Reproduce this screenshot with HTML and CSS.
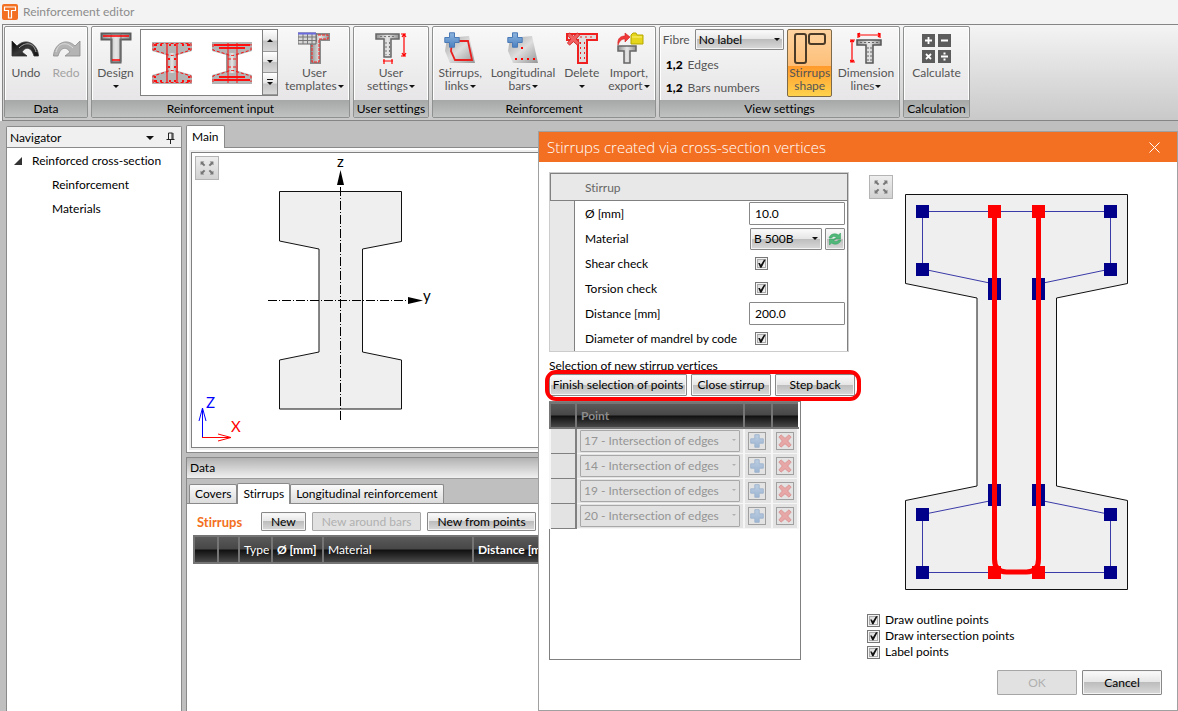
FILE: index.html
```html
<!DOCTYPE html>
<html lang="en">
<head>
<meta charset="utf-8">
<title>Reinforcement editor</title>
<link rel="stylesheet" href="styles.css">
</head>
<body>
<svg class="defs" width="0" height="0" aria-hidden="true">
  <defs>
    <linearGradient id="steel" x1="0" y1="0" x2="1" y2="1"><stop offset="0" stop-color="#a4a4a4"/><stop offset=".5" stop-color="#dedede"/><stop offset="1" stop-color="#969696"/></linearGradient>
    <linearGradient id="web" x1="0" y1="0" x2="1" y2="0"><stop offset="0" stop-color="#929292"/><stop offset=".5" stop-color="#e6e6e6"/><stop offset="1" stop-color="#929292"/></linearGradient>
    <linearGradient id="ink" x1="0" y1="0" x2="1" y2="1"><stop offset="0" stop-color="#000"/><stop offset=".5" stop-color="#3a3a3a"/><stop offset="1" stop-color="#111"/></linearGradient>
    <linearGradient id="blue" x1="0" y1="0" x2="0" y2="1"><stop offset="0" stop-color="#8fb6e0"/><stop offset="1" stop-color="#4a80c0"/></linearGradient>
    <symbol id="plus" viewBox="0 0 16 16"><path d="M5.500.8h5v4.700h4.700v5h-4.700v4.700h-5v-4.700H.8v-5h4.700z" fill="url(#blue)" stroke="#4a7ab5"/></symbol>
    <symbol id="cross" viewBox="0 0 16 16"><path d="M3.500 1L8 5l4.500-4L15 3.500 11 8l4 4.500-2.500 2.500L8 11l-4.500 4L1 12.500 5 8 1 3.500z" fill="#f06060" stroke="#d02828"/></symbol>
    <symbol id="expand" viewBox="0 0 24 24"><path d="M5 5h4L7.800 6.200l2.400 2.400-1.600 1.600-2.400-2.400L5 9zM19 5v4l-1.200-1.200-2.400 2.400-1.600-1.600 2.400-2.400L15 5zM5 19v-4l1.200 1.200 2.400-2.400 1.600 1.600-2.400 2.400L9 19zM19 19h-4l1.200-1.200-2.400-2.400 1.600-1.600 2.400 2.400L19 15z" fill="#777"/></symbol>
    <symbol id="isection" viewBox="0 0 42 44"><path d="M1 1h40v9l-14 4v16l14 4v9H1v-9l14-4V14L1 10z" fill="#b4b4b4"/><path d="M15 12h12v20H15z" fill="url(#web)"/></symbol>
    <symbol id="tsection" viewBox="0 0 32 32"><path d="M1.500 1.500h29v6h-10v23h-9v-23h-10z" fill="url(#web)" stroke="#5c5c5c" stroke-width="2"/><path d="M11 2h10v28H11z" fill="none" stroke="#777"/></symbol>
  </defs>
</svg>

<div class="window">
  <header class="titlebar">
    <svg class="logo" width="16" height="16" viewBox="0 0 16 16"><rect width="16" height="16" rx="2" fill="#f36f21"/><path d="M2.500 3h11v3.500h-4V14h-3V6.500h-4z" fill="none" stroke="#fff" stroke-width="1.200"/></svg>
    <h1>Reinforcement editor</h1>
  </header>

  <div class="ribbon">
    <section class="group g-data">
      <div class="tools">
        <button class="tool"><svg width="32" height="32" viewBox="0 0 32 32"><path d="M2 9v15h15l-5-4c3-5 9-6 12 4h4.500C28 12 16 5 7 14z" fill="url(#ink)" stroke="#333" stroke-width=".8"/><path d="M9 16C16 9 24 11 26 20" fill="none" stroke="#aaa"/></svg><span>Undo</span></button>
        <button class="tool" disabled><svg width="32" height="32" viewBox="0 0 32 32"><path d="M30 9v15H15l5-4c-3-5-9-6-12 4H3.500C4 12 16 5 25 14z" fill="#b4b4b4" stroke="#8c8c8c" stroke-width=".8"/><path d="M23 16C16 9 8 11 6 20" fill="none" stroke="#ddd"/></svg><span>Redo</span></button>
      </div>
      <h2>Data</h2>
    </section>
    <section class="group g-input">
      <div class="tools">
        <button class="tool"><svg width="32" height="32"><use href="#tsection"/><path d="M3 4h26M12 28h8" stroke="red" stroke-width="1.500"/></svg><span>Design<br><i class="drop"></i></span></button>
        <div class="gallery">
          <button class="thumb" aria-label="Template with bars"><svg width="42" height="44" viewBox="0 0 42 44"><use href="#isection"/><path d="M16 2v40M26 2v40" stroke="#ff1010" stroke-width="1.200"/><path d="M2 2.500v6.500l13 4q6 3 12 0l13-4V2.500zM2 41.500V35l13-4q6-3 12 0l13 4v6.500z" fill="none" stroke="#ff1010" stroke-dasharray="3 2"/><path d="M3 4h3M9 4h2M18 4h2M23 4h2M31 4h2M36 4h3M3 40h3M9 40h2M18 40h2M23 40h2M31 40h2M36 40h3M17 18h2M23 18h2M17 26h2M23 26h2M3 8h2M37 8h2M3 36h2M37 36h2" stroke="#ff1010" stroke-width="2"/></svg></button>
          <button class="thumb" aria-label="Template with flange bars"><svg width="42" height="44" viewBox="0 0 42 44"><use href="#isection"/><path d="M17 2v40M26 2v40" stroke="#ff1010"/><path d="M3 4h36M8 7h26M3 39h36M8 36h26" stroke="#ff1010" stroke-width="2"/><path d="M2 3v6l13 4q6 3 12 0l13-4V3M2 41v-6l13-4q6-3 12 0l13 4v6M17 18h9M17 26h9" fill="none" stroke="#ff1010" stroke-dasharray="3 2"/></svg></button>
          <div class="spin"><button aria-label="Scroll up"><i class="drop up"></i></button><button aria-label="Scroll down"><i class="drop"></i></button><button aria-label="More"><i class="drop more"></i></button></div>
        </div>
        <button class="tool"><svg width="32" height="32" viewBox="0 0 32 32"><path d="M18 2h13v6h-9v23h-9V9h5z" fill="url(#web)" stroke="#8a8a8a" stroke-width="2"/><path d="M20 3h10v4h-9v23h-7V13" fill="none" stroke="#ff2020" stroke-dasharray="3 1"/><path d="M0 1h18v11H0z" fill="#d5d5d5" stroke="#666"/><path d="M0 5h18M0 8.500h18M5 2v10M9.500 2v10M14 2v10" stroke="#777"/><path d="M0 1.500h18" stroke="#6a6ae0" stroke-width="2"/></svg><span>User<br>templates<i class="drop"></i></span></button>
      </div>
      <h2>Reinforcement input</h2>
    </section>
    <section class="group g-user">
      <div class="tools">
        <button class="tool"><svg width="32" height="32" viewBox="0 0 32 32"><path d="M1 2h23v5h-8v18H9V7H1z" fill="url(#web)" stroke="#666" stroke-width="1.500"/><path d="M5 4.500h15M11 10v13M14.500 10v13" stroke="#777" stroke-dasharray="2 2"/><path d="M29 2v22M26 2h5M26 24h5M27 5l2-3 2 3M27 21l2 3 2-3M8 29h10M9 27v5M17 27v5" fill="none" stroke="red" stroke-width="1.200"/></svg><span>User<br>settings<i class="drop"></i></span></button>
      </div>
      <h2>User settings</h2>
    </section>
    <section class="group g-reinf">
      <div class="tools">
        <button class="tool"><svg width="32" height="32" viewBox="0 0 32 32"><path d="M3 6l22-2 6 27H6L1 19z" fill="url(#steel)"/><path d="M8 9h16l4 19H11L7 19z" fill="none" stroke="#e82020" stroke-width="1.800"/><use href="#plus" width="16" height="16"/></svg><span>Stirrups,<br>links<i class="drop"></i></span></button>
        <button class="tool"><svg width="32" height="32" viewBox="0 0 32 32"><path d="M3 6l22-2 6 27H6L1 19z" fill="url(#steel)"/><path d="M14 16h2M8 27h2M14 27h2M20 27h2M26 27h2" stroke="red" stroke-width="2"/><use href="#plus" width="16" height="16"/></svg><span>Longitudinal<br>bars<i class="drop"></i></span></button>
        <button class="tool"><svg width="32" height="32" viewBox="0 0 32 32"><path d="M1 2h30v6H21v23h-9V8H1z" fill="#ddd" stroke="#f02020" stroke-width="2"/><path d="M14 5h15M14.500 10v18M18.500 10v18" stroke="#f02020" stroke-dasharray="2 3"/><use href="#cross" width="15" height="14"/></svg><span>Delete<br><i class="drop"></i></span></button>
        <button class="tool"><svg width="32" height="32" viewBox="0 0 32 32"><path d="M5 14h18v5h-6v12h-6V19H5z" fill="url(#web)" stroke="#666" stroke-width="1.500"/><path d="M5 13C4 6 8 4 12 4V1l5 4-5 5V7C9 7 7 8 5 13z" fill="#f03838" stroke="#d02020" stroke-width=".6"/><path d="M18 3l2-2h3l1 2h6v9H18z" fill="#e5d51c" stroke="#b5a800"/><path d="M19 5h10" stroke="#fff27a"/></svg><span>Import,<br>export<i class="drop"></i></span></button>
      </div>
      <h2>Reinforcement</h2>
    </section>
    <section class="group g-view">
      <div class="tools">
        <div class="labels">
          <div class="fibre"><label for="fibre">Fibre</label><div class="select"><select id="fibre"><option>No label</option></select></div></div>
          <button class="line"><b>1,2</b>Edges</button>
          <button class="line"><b>1,2</b>Bars numbers</button>
        </div>
        <button class="tool pressed" aria-pressed="true"><svg width="32" height="32" viewBox="0 0 32 32"><rect x="1" y="2" width="11" height="29" rx="2" fill="none" stroke="#4a3a28" stroke-width="2"/><rect x="15" y="2" width="16" height="10" rx="2" fill="none" stroke="#4a3a28" stroke-width="2"/></svg><span>Stirrups<br>shape</span></button>
        <button class="tool"><svg width="32" height="32" viewBox="0 0 32 32"><path d="M7 8h24v5h-8v18h-7V13H7z" fill="url(#web)" stroke="#555" stroke-width="1.500"/><path d="M10 10.500h18M18 15v14M21 15v14" stroke="#666" stroke-dasharray="2 2"/><path d="M8 3h22M8 1v5M30 1v5M10 1L8 3l2 2M28 1l2 2-2 2M2 8v22M0 8h5M0 30h5M0 10l2-2 2 2M0 28l2 2 2-2" fill="none" stroke="red" stroke-width="1.200"/></svg><span>Dimension<br>lines<i class="drop"></i></span></button>
      </div>
      <h2>View settings</h2>
    </section>
    <section class="group g-calc">
      <div class="tools">
        <button class="tool"><svg width="32" height="32" viewBox="0 0 32 32"><path d="M1 2h13v13H1zM17 2h13v13H17zM1 18h13v13H1zM17 18h13v13H17z" fill="#5c5c5c"/><path d="M4 8.500h7M7.500 5v7M20 8.500h7M5 22l5 5M10 22l-5 5M20 24.500h7M22.500 21.500h2M22.500 27.500h2" stroke="#fff" stroke-width="1.800"/></svg><span>Calculate</span></button>
      </div>
      <h2>Calculation</h2>
    </section>
  </div>

  <div class="workspace">
    <nav class="navigator">
      <header><h2>Navigator</h2><i class="drop wide"></i><svg width="9" height="12" viewBox="0 0 9 12"><path d="M2.500 1h4M2.500 1v6M6 1v6M7 1v6M.5 7.500h8M4.500 8v4" fill="none" stroke="#222"/></svg></header>
      <ul>
        <li class="root"><svg width="9" height="8" viewBox="0 0 9 8"><path d="M8 0v8H0z" fill="#333"/></svg><a href="#section">Reinforced cross-section</a></li>
        <li><a href="#reinforcement">Reinforcement</a></li>
        <li><a href="#materials">Materials</a></li>
      </ul>
    </nav>

    <main class="content">
      <button class="tab main-tab">Main</button>
      <div class="main-pane">
        <div class="canvas">
          <button class="expand" aria-label="Fit view"><svg width="22" height="22"><use href="#expand" width="22" height="22"/></svg></button>
          <svg width="346" height="294" viewBox="192 153 346 294">
            <path d="M279.500 191.500h122v50L362.500 249v103l39 8v49h-122v-49l39.500-8V249l-39.500-8z" fill="#efefef" stroke="#111"/>
            <path d="M340.500 420V184M268 300.500h142" stroke="#000" stroke-dasharray="9 2 1 2"/>
            <path d="M340.500 170l3.500 15h-7zM423 300.500l-15-3.500v7z"/>
            <path d="M202.500 437v-28M199 421l3.500-13 3.500 13" fill="none" stroke="#00f"/>
            <path d="M202 437.500h29M218 434l13 3.500-13 3.500" fill="none" stroke="red"/>
            <g class="axis"><text x="337" y="167">z</text><text x="423" y="301">y</text><text x="206" y="408" fill="#00f">Z</text><text x="231" y="432" fill="red">X</text></g>
          </svg>
        </div>
      </div>
      <section class="data">
        <h2>Data</h2>
        <div class="tabs"><button class="tab">Covers</button><button class="tab active">Stirrups</button><button class="tab">Longitudinal reinforcement</button></div>
        <div class="sheet">
          <div class="sheet-bar"><h3>Stirrups</h3><button class="btn">New</button><button class="btn" disabled>New around bars</button><button class="btn">New from points</button></div>
          <table class="grid stirrups">
            <thead><tr><th class="c24"></th><th class="c21"></th><th class="c33 plain">Type</th><th class="c51">Ø [mm]</th><th class="c150 plain">Material</th><th>Distance [mm]</th></tr></thead>
          </table>
        </div>
      </section>
    </main>
  </div>

  <div class="dialog" role="dialog" aria-labelledby="dlg-title">
    <header class="dialog-title"><h2 id="dlg-title">Stirrups created via cross-section vertices</h2><button aria-label="Close"><svg width="11" height="11" viewBox="0 0 11 11"><path d="M.5.5l10 10M10.500.5l-10 10" stroke="#fff"/></svg></button></header>
    <div class="dialog-body">
      <div class="settings">
        <div class="props">
          <h3>Stirrup</h3>
          <div class="rows">
            <div class="row"><label for="dia">Ø [mm]</label><input id="dia" type="text" value="10.0"></div>
            <div class="row"><label for="mat">Material</label><div class="pair"><div class="select"><select id="mat"><option>B 500B</option></select></div><button class="btn icon" aria-label="Refresh"><svg width="16" height="16" viewBox="0 0 16 16"><path d="M2 7C3 3 8 1.500 11.500 4L13.500 2v6h-6l2-2C7.500 5 5 5.500 4.500 7zM14 9c-1 4-6 5.500-9.500 3l-2 2V8h6l-2 2c2 1 4.500.5 5-1z" fill="#50b878" stroke="#2e9a5c" stroke-width=".5"/></svg></button></div></div>
            <div class="row"><label for="shear">Shear check</label><input id="shear" type="checkbox" checked></div>
            <div class="row"><label for="torsion">Torsion check</label><input id="torsion" type="checkbox" checked></div>
            <div class="row"><label for="dist">Distance [mm]</label><input id="dist" type="text" value="200.0"></div>
            <div class="row"><label for="mandrel">Diameter of mandrel by code</label><input id="mandrel" type="checkbox" checked></div>
          </div>
        </div>
        <p class="caption">Selection of new stirrup vertices</p>
        <div class="actions"><button class="btn finish">Finish selection of points</button><button class="btn">Close stirrup</button><button class="btn">Step back</button></div>
        <div class="points">
          <table class="grid">
            <thead><tr><th class="c26"></th><th class="c168">Point</th><th class="c28"></th><th></th></tr></thead>
            <tbody>
              <tr><td></td><td><div class="select"><select disabled aria-label="Point 1"><option>17 - Intersection of edges</option></select></div></td><td><button class="mini" disabled aria-label="Add"><svg width="14" height="14"><use href="#plus" width="14" height="14"/></svg></button></td><td><button class="mini" disabled aria-label="Delete"><svg width="14" height="14"><use href="#cross" width="14" height="14"/></svg></button></td></tr>
              <tr><td></td><td><div class="select"><select disabled aria-label="Point 2"><option>14 - Intersection of edges</option></select></div></td><td><button class="mini" disabled aria-label="Add"><svg width="14" height="14"><use href="#plus" width="14" height="14"/></svg></button></td><td><button class="mini" disabled aria-label="Delete"><svg width="14" height="14"><use href="#cross" width="14" height="14"/></svg></button></td></tr>
              <tr><td></td><td><div class="select"><select disabled aria-label="Point 3"><option>19 - Intersection of edges</option></select></div></td><td><button class="mini" disabled aria-label="Add"><svg width="14" height="14"><use href="#plus" width="14" height="14"/></svg></button></td><td><button class="mini" disabled aria-label="Delete"><svg width="14" height="14"><use href="#cross" width="14" height="14"/></svg></button></td></tr>
              <tr><td></td><td><div class="select"><select disabled aria-label="Point 4"><option>20 - Intersection of edges</option></select></div></td><td><button class="mini" disabled aria-label="Add"><svg width="14" height="14"><use href="#plus" width="14" height="14"/></svg></button></td><td><button class="mini" disabled aria-label="Delete"><svg width="14" height="14"><use href="#cross" width="14" height="14"/></svg></button></td></tr>
            </tbody>
          </table>
        </div>
      </div>
      <div class="preview">
        <div class="canvas">
          <button class="expand" aria-label="Fit view"><svg width="22" height="22"><use href="#expand" width="22" height="22"/></svg></button>
          <svg width="295" height="430" viewBox="867 172 295 430">
            <path d="M905.500 194.500h222v89L1056.500 298v188l71 14.500v89h-222v-89l71.500-14.500V298l-71.500-14.500z" fill="#efefef" stroke="#111"/>
            <path d="M922.500 211.500h188v57.500L1038.500 284v216l72 14.500v58h-188v-58l72-14.500V284l-72-15z" fill="none" stroke="#3a3aa8"/>
            <path d="M916 205h13v13h-13zM1104 205h13v13h-13zM916 263h13v13h-13zM1104 263h13v13h-13zM988 278h13v22h-13zM1032 278h13v22h-13zM988 484h13v22h-13zM1032 484h13v22h-13zM916 508h13v13h-13zM1104 508h13v13h-13zM916 566h13v13h-13zM1104 566h13v13h-13z" fill="#00008b"/>
            <path d="M988 205h13v13h-13zM1032 205h13v13h-13zM988 566h13v13h-13zM1032 566h13v13h-13z" fill="red"/>
            <path d="M994.500 212v347q0 13 12 13h20q12 0 12-13V212" fill="none" stroke="red" stroke-width="5"/>
          </svg>
        </div>
        <div class="checks">
          <label><input type="checkbox" checked>Draw outline points</label>
          <label><input type="checkbox" checked>Draw intersection points</label>
          <label><input type="checkbox" checked>Label points</label>
        </div>
      </div>
    </div>
    <footer class="dialog-foot"><button class="btn" disabled>OK</button><button class="btn">Cancel</button></footer>
  </div>
</div>
</body>
</html>
```

FILE: styles.css
```css
* { box-sizing: border-box; }
body {
  margin: 0;
  font: 12px/16px Lato, "Open Sans", sans-serif;
  font-variant-ligatures: none;
  color: #000;
}
h1, h2, h3, p, ul { margin: 0; padding: 0; font: inherit; list-style: none; }
button, input, select { font: inherit; color: inherit; margin: 0; }
button { border: 0; background: none; padding: 0; cursor: pointer; }
a { color: inherit; text-decoration: none; }
svg { display: block; flex: none; }
.defs { position: absolute; }

.window {
  position: relative;
  display: flex;
  flex-direction: column;
  min-height: 100vh;
  background: #f3f3f3;
  overflow: hidden;
}

/* Title bar */
.titlebar { display: flex; align-items: center; gap: 5px; height: 24px; padding-left: 2px; }
.titlebar h1 { color: #8c8c8c; }

/* Small arrows */
.drop {
  display: inline-block;
  margin-left: 2px;
  border: 3px solid transparent;
  border-top-color: #111;
  border-bottom: 0;
  vertical-align: middle;
}
.drop.up { border-top: 0; border-bottom: 3px solid #111; }
.drop.wide { border-width: 4px 4px 0; }
.drop.more { position: relative; }
.drop.more::before { content: ""; position: absolute; left: -3px; top: -6px; width: 6px; height: 1px; background: #111; }

/* Ribbon */
.ribbon {
  display: flex;
  align-items: flex-start;
  gap: 3px;
  height: 97px;
  margin-left: 2px;
  padding: 1px 0 0 1px;
  border: solid #858585;
  border-width: 1px 0 1px 1px;
  background: linear-gradient(#f4f4f4, #c9c9c9);
}
.group {
  display: flex;
  flex-direction: column;
  flex: none;
  border: 1px solid #8f9090;
  border-radius: 2px;
  background: linear-gradient(#f8f8f8, #e3e1e3);
  box-shadow: inset 0 0 0 1px #fff;
}
.group h2 {
  height: 17px;
  line-height: 17px;
  text-align: center;
  background: linear-gradient(#a6a8a8, #c0c2c2);
}
.g-data { width: 84px; }
.g-input { width: 259px; }
.g-user { width: 76px; }
.g-reinf { width: 224px; }
.g-view { width: 241px; }
.g-calc { width: 67px; }
.tools { display: flex; justify-content: space-around; height: 73px; padding: 2px 1px; }
.tool {
  display: flex;
  flex-direction: column;
  align-items: center;
  gap: 2px;
  padding: 2px 1px;
  line-height: 13px;
  color: #555;
  border: 1px solid transparent;
}
.tool .drop { margin-left: 1px; }
.tool:disabled { color: #a2a2a2; }
.tool.pressed {
  height: 68px;
  border-color: #7d6a4a;
  border-radius: 2px;
  background: linear-gradient(#fdd3a0, #fdbf78 54%, #ff9a2b 55%, #ffd24d);
}
.gallery { display: flex; width: 138px; height: 67px; border: 1px solid #808080; background: #fff; }
.thumb { flex: 1; display: grid; place-items: center; }
.spin { display: grid; width: 15px; border-left: 1px solid #808080; }
.spin button {
  display: grid;
  place-items: center;
  border-bottom: 1px solid #999;
  background: linear-gradient(#fff, #e6e6e6 48%, #c4c4c4 52%, #d8d8d8);
}
.spin .drop { margin: 0; }
.labels { display: flex; flex-direction: column; gap: 7px; color: #555; }
.fibre { display: flex; align-items: center; gap: 5px; }
.fibre .select { width: 89px; height: 21px; color: #000; }
.line { display: flex; gap: 5px; padding-left: 3px; }
.line b { font-weight: 900; color: #000; }

/* Shared controls */
.btn, .select select {
  border: 1px solid #888;
  border-radius: 1px;
  background: linear-gradient(#fbfbfb, #e6e6e6 48%, #bdbdbd 50%, #d9d9d9);
  box-shadow: inset 0 0 0 1px #f4f4f4;
}
.btn { padding: 0 9px; text-align: center; white-space: nowrap; }
.btn:disabled { color: #b0b0b0; background: #e1e1e1; border-color: #a6a6a6; box-shadow: none; }
.select { position: relative; }
.select select { appearance: none; display: block; width: 100%; height: 100%; padding: 0 14px 0 3px; }
.select::after {
  content: "";
  position: absolute;
  right: 4px;
  top: 9px;
  border: 3px solid transparent;
  border-top-color: #111;
  border-bottom: 0;
  pointer-events: none;
}
.select select:disabled { opacity: 1; color: #959595; background: #e1e1e1; border-color: #a8a8a8; box-shadow: none; }
.select:has(:disabled)::after { border-top-color: #b0b0b0; }
input[type="text"] { width: 96px; height: 23px; padding: 0 5px; border: 1px solid #888; border-radius: 1px; background: #fff; }
input[type="checkbox"] {
  appearance: none;
  width: 13px;
  height: 13px;
  border: 1px solid #777;
  background: linear-gradient(135deg, #d0d0d0, #fff);
  box-shadow: inset 0 0 0 1px #f4f4f4, inset 0 0 0 2px #aaa;
}
input[type="checkbox"]:checked::before {
  content: "";
  display: block;
  width: 11px;
  height: 11px;
  background: #111;
  clip-path: polygon(20% 45%, 35% 45%, 44% 62%, 72% 16%, 88% 16%, 50% 88%, 38% 88%);
}
.expand {
  position: absolute;
  width: 24px;
  height: 24px;
  border: 1px solid #b4b4b4;
  background: linear-gradient(#eee, #d2d2d2);
}
.canvas { position: relative; }

/* Workspace */
.workspace {
  flex: 1;
  display: grid;
  grid-template-columns: 176px 1fr;
  gap: 4px;
  padding-left: 6px;
  background: #bfbfbf;
}
.navigator { margin-top: 5px; border: 1px solid #8a8a8a; border-bottom: 0; border-radius: 2px 2px 0 0; background: #fff; }
.navigator header {
  display: flex;
  align-items: center;
  gap: 12px;
  height: 21px;
  padding: 1px 6px 0 3px;
  border-bottom: 1px solid #8a8a8a;
  background: #f0f0f0;
}
.navigator h2 { margin-right: auto; }
.navigator ul { padding-top: 1px; line-height: 24px; }
.navigator li { padding-left: 45px; }
.navigator .root { display: flex; align-items: center; gap: 9px; padding-left: 7px; }

.content { display: flex; flex-direction: column; align-items: stretch; min-width: 0; padding-top: 4px; }
.tab {
  height: 19px;
  padding: 0 5px;
  border: 1px solid #8a8a8a;
  border-bottom: 0;
  border-radius: 2px 2px 0 0;
  background: linear-gradient(#fafafa, #dcdcdc);
}
.main-tab { align-self: flex-start; position: relative; height: 23px; margin-bottom: -1px; background: #fff; }
.main-pane { padding: 4px; border: 1px solid #8a8a8a; background: #fff; }
.main-pane .canvas { border: 1px solid #808080; box-shadow: 0 0 0 2px #eee; }
.main-pane .expand { left: 3px; top: 3px; }
.axis { font: 15px Lato, sans-serif; }
.data { flex: 1; display: flex; flex-direction: column; margin-top: 4px; border-left: 1px solid #8a8a8a; }
.data h2 { height: 22px; padding: 2px 3px; border-top: 1px solid #8a8a8a; border-bottom: 1px solid #999; background: linear-gradient(#b2b2b2, #f0f0f0); }
.tabs { display: flex; align-items: flex-end; padding: 4px 0 0 2px; border-bottom: 1px solid #8a8a8a; }
.tab.active { height: 21px; margin-bottom: -1px; background: #fff; }
.sheet { flex: 1; padding-left: 6px; background: #fff; }
.sheet-bar { display: flex; align-items: center; gap: 6px; height: 31px; padding: 4px 4px 0; }
.sheet-bar h3 { width: 58px; font-size: 13px; font-weight: 700; color: #f36f21; }
.sheet-bar .btn { height: 19px; line-height: 17px; }

/* Data grids */
.grid { width: 100%; border-collapse: collapse; table-layout: fixed; }
.grid th {
  height: 27px;
  padding: 0 4px;
  text-align: left;
  color: #fff;
  border: solid #757575;
  border-width: 2px 0 2px 2px;
  background: linear-gradient(#5a5a5a, #474747 48%, #101010 52%, #484848);
}
.grid .plain { font-weight: 400; }
.c21 { width: 21px; }
.c24 { width: 24px; }
.c26 { width: 26px; }
.c28 { width: 28px; }
.c33 { width: 33px; }
.c51 { width: 51px; }
.c150 { width: 150px; }
.c168 { width: 168px; }

/* Dialog */
.dialog {
  position: absolute;
  top: 131px;
  right: 0;
  bottom: 0;
  width: 640px;
  display: flex;
  flex-direction: column;
  border: 1px solid #a0a0a0;
  background: #fff;
}
.dialog-title { display: flex; align-items: center; justify-content: space-between; height: 30px; padding: 0 17px 0 8px; color: #fff; background: #f36f21; }
.dialog-title h2 { font: 300 15px/30px "Open Sans", sans-serif; }
.dialog-body { flex: 1; display: grid; grid-template-columns: 300px 1fr; gap: 18px; padding: 10px 15px 10px 10px; }
.settings { display: flex; flex-direction: column; }
.props { border: 1px solid #ccc; background: #e8e8e8; }
.props h3 { height: 28px; padding-left: 34px; line-height: 28px; color: #666; border: 1px solid #808080; }
.rows { margin-left: 24px; border: solid #808080; border-width: 0 1px; background: #fff; }
.row { display: grid; grid-template-columns: 164px 96px; align-items: center; height: 25px; padding-left: 10px; }
.row input[type="checkbox"] { margin-left: 6px; }
.pair { display: flex; justify-content: space-between; padding-left: 1px; }
.pair .select { width: 72px; height: 22px; }
.btn.icon { width: 20px; height: 22px; padding: 0 1px; }
.caption { margin-top: 6px; }
.actions { position: relative; display: grid; grid-template-columns: 138px 80px 80px; gap: 4px; }
.actions .btn { height: 22px; padding: 0; }
.actions::after { content: ""; position: absolute; inset: -4px -12px -5px -4px; border: 4px solid red; border-radius: 11px; pointer-events: none; }
.points { flex: 1; width: 252px; margin-top: 5px; border: 1px solid #808080; }
.points .grid { margin-left: -1px; }
.points th { height: 25px; color: #8c8c8c; }
.points td { height: 25px; padding: 1px 3px; border: 2px solid #f6f6f6; border-width: 1px 2px; background: #e3e3e3; }
.points td:first-child { border-right-color: #808080; border-bottom-color: #808080; }
.points td .select { height: 22px; }
.points td .select::after { border-width: 2px 2px 0; }
.mini { display: grid; place-items: center; width: 18px; height: 18px; border: 1px solid #a0a0a0; }
.mini svg { opacity: .45; }
.preview { display: flex; flex-direction: column; justify-content: space-between; }
.preview .expand { left: 2px; top: 3px; }
.checks label { display: flex; align-items: center; gap: 5px; }
.dialog-foot { display: flex; justify-content: flex-end; gap: 5px; padding: 0 15px 15px; }
.dialog-foot .btn { width: 80px; height: 25px; }
```
